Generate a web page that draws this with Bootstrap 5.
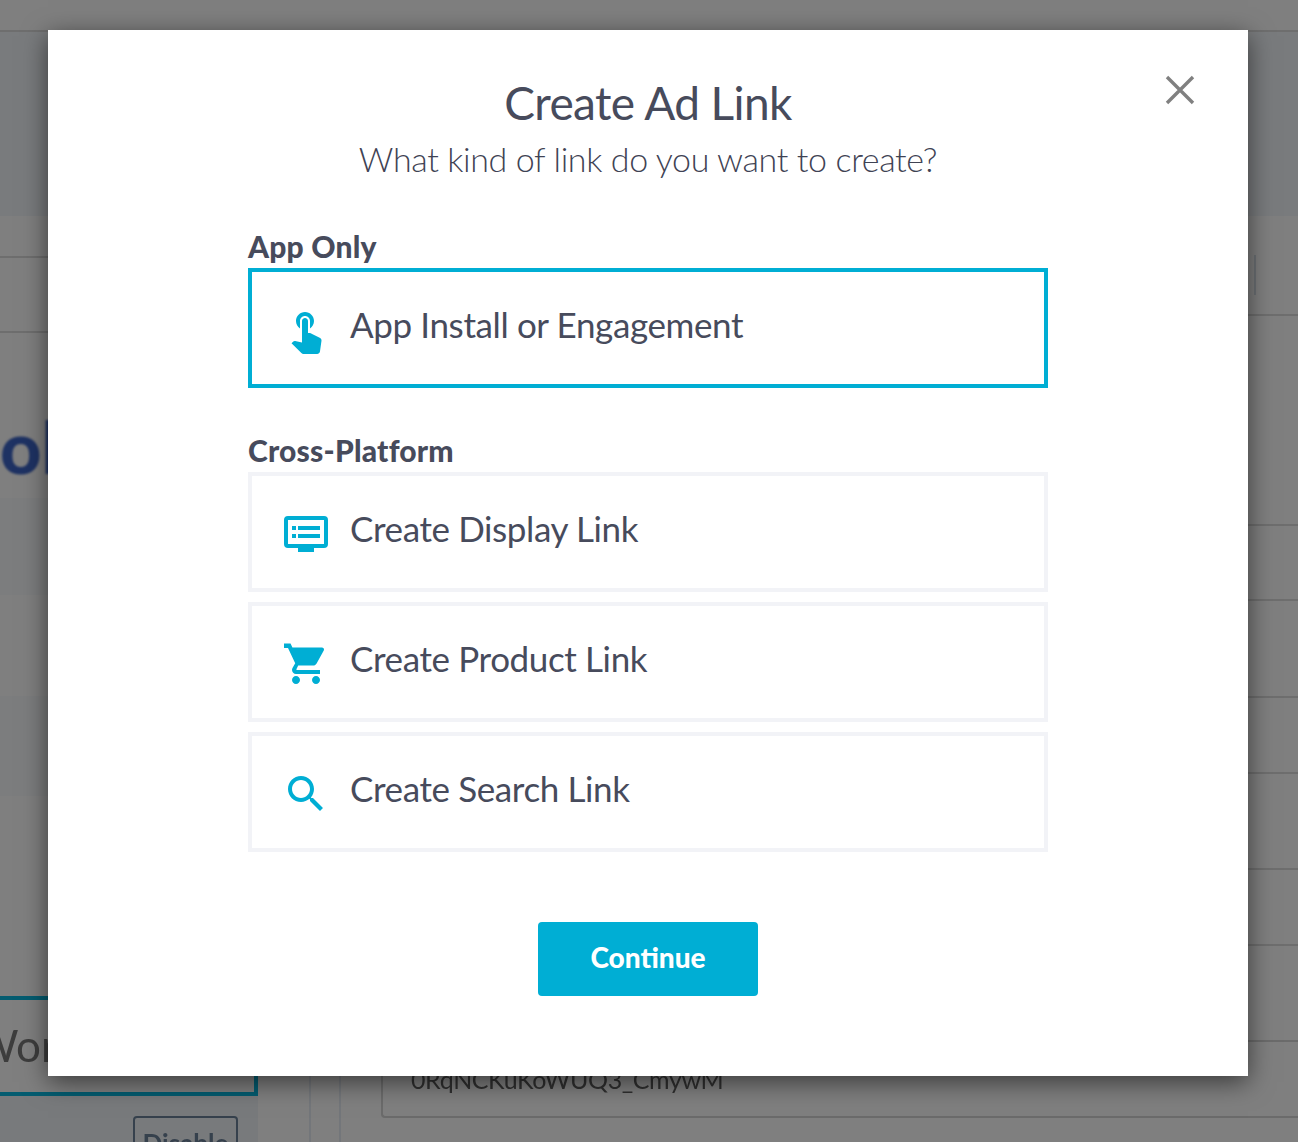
<!DOCTYPE html>
<html lang="en">
<head>
<meta charset="utf-8">
<title>Create Ad Link</title>
<link href="https://cdn.jsdelivr.net/npm/bootstrap@5.3.0/dist/css/bootstrap.min.css" rel="stylesheet">
<style>
html,body{height:1142px;overflow:hidden;background:#7f7f7f;}
body{font-family:"Lato","Liberation Sans",sans-serif;color:#474b5c;}
.stage{position:relative;width:1298px;height:1142px;overflow:hidden;background:#7f7f7f;}
.bg-line{border-bottom:2px solid #6e6e6e;}
.bg-top{height:32px;}
.bg-band{height:84px;background:#797b7d;}
.bg-band-inner{height:100px;background:#797b7d;}
.bg-left{width:258px;flex:none;}
.bg-right{flex:1 1 auto;min-width:0;}
.lb-a{height:42px;}
.lb-b{height:75px;}
.lb-title{height:165px;font:900 72px/1 "Lato",sans-serif;color:#1e3263;padding-top:77px;filter:blur(1px);white-space:nowrap;}
.lb-c{height:97px;background:#7c7d7e;}
.lb-d{height:101px;}
.lb-e{height:100px;background:#7c7d7e;}
.lb-f{height:200px;}
.lb-box{height:100px;border:4px solid #045c70;border-left:0;font-size:44px;line-height:52px;padding-top:19px;color:#3d3d3d;filter:blur(.5px);white-space:nowrap;overflow:hidden;}
.lb-box span{margin-left:-27px;}
.lb-foot{height:60px;padding:20px 0 0 133px;background:#787a7c;}
.lb-btn{width:105px;height:50px;border:2px solid #36414d;border-radius:4px;font:700 26px/1 "Lato",sans-serif;color:#36414d;text-align:center;padding-top:12px;filter:blur(.4px);}
.rr-a{height:100px;display:flex;justify-content:flex-end;padding:39px 42px 0 0;}
.rr-bar{width:2px;height:40px;background:#6c7074;}
.rr-b{height:210px;}
.rr-c{height:75px;}
.rr-d{height:97px;}
.rr-d2{height:96px;}
.rr-e{height:76px;}
.rr-nest{margin-left:51px;border-left:2px solid #73767a;height:100%;padding-left:28px;}
.rr-nest2{border-left:2px solid #73767a;height:100%;padding-left:40px;}
.rr-box{height:78px;border:2px solid #6b6b6b;border-right:0;border-radius:4px 0 0 4px;padding:20px 0 0 28px;font-size:25px;line-height:34px;letter-spacing:-.4px;color:#303030;filter:blur(.3px);white-space:nowrap;}
.rr-slot{height:94px;}
.ad-layer{position:absolute;left:48px;top:30px;width:1200px;}
.ad-dialog{position:relative;height:1046px;background:#fff;border:0;border-radius:0;box-shadow:0 6px 24px rgba(0,0,0,.55);padding-top:43px;}
.ad-title{font:400 46px/60px "Lato",sans-serif;margin:0;color:#474b5c;letter-spacing:-.6px;}
.ad-sub{font:300 34px/50px "Lato",sans-serif;margin:1px 0 0;color:#3f4354;letter-spacing:-.38px;}
.ad-close{position:absolute;left:1117px;top:45px;width:30px;height:30px;padding:0;background:none;border:0;color:#808080;display:block;}
.ad-body{width:800px;margin:0 auto;}
.ad-label{font:900 30px/40px "Lato",sans-serif;letter-spacing:.2px;color:#474b5c;margin:0;padding-bottom:2px;}
.ad-first{margin-top:42px;}
.ad-second{margin-top:42px;}
.ad-opt{height:120px;border:4px solid #f2f3f7;background:#fff;padding:0 0 0 30px;color:#474b5c;font-size:35px;line-height:44px;letter-spacing:-.38px;border-radius:0;}
.ad-opt.is-on{border-color:#00aed4;}
.ad-opt svg{width:48px;height:48px;flex:none;margin:4px 20px 0 0;fill:#00aed4;}
.ad-opt span{display:block;margin-top:-9px;}
.ad-stack{gap:10px;}
.ad-go{width:220px;height:74px;background:#00aed4;border:0;border-radius:4px;color:#fff;font:900 28px/1 "Lato",sans-serif;margin-top:70px;padding:0 0 4px;}
.ad-go:hover{background:#00aed4;color:#fff;}
</style>
</head>
<body>
<div class="stage">
  <div class="bg-top bg-line"></div>
  <div class="bg-band"></div>
  <div class="bg-band-inner"></div>
  <div class="d-flex">
    <div class="bg-left">
      <div class="lb-a bg-line"></div>
      <div class="lb-b bg-line"></div>
      <div class="lb-title">ol</div>
      <div class="lb-c"></div>
      <div class="lb-d"></div>
      <div class="lb-e"></div>
      <div class="lb-f"></div>
      <div class="lb-box"><span>Wor</span></div>
      <div class="lb-foot"><div class="lb-btn">Disable</div></div>
    </div>
    <div class="bg-right">
      <div class="rr-a bg-line"><div class="rr-bar"></div></div>
      <div class="rr-b bg-line"></div>
      <div class="rr-c bg-line"></div>
      <div class="rr-d bg-line"></div>
      <div class="rr-e bg-line"></div>
      <div class="rr-d2 bg-line"></div>
      <div class="rr-e bg-line"></div>
      <div class="rr-nest">
        <div class="rr-nest2">
          <div class="rr-slot"></div>
          <div class="rr-box">0RqNCKuKoWUQ3_CmywM</div>
        </div>
      </div>
    </div>
  </div>

  <div class="ad-layer">
    <div class="ad-dialog modal-content text-center">
      <button type="button" class="ad-close" aria-label="Close">
        <svg viewBox="0 0 30 30" width="30" height="30"><path d="M2 2 L28 28 M28 2 L2 28" stroke="currentColor" stroke-width="3.4" fill="none"/></svg>
      </button>
      <h1 class="ad-title">Create Ad Link</h1>
      <p class="ad-sub">What kind of link do you want to create?</p>
      <div class="ad-body text-start">
        <h2 class="ad-label ad-first">App Only</h2>
        <a href="#" class="ad-opt is-on d-flex align-items-center text-decoration-none">
          <svg viewBox="0 0 24 24"><path d="M9 11.24V7.5C9 6.12 10.12 5 11.5 5S14 6.12 14 7.5v3.74c1.21-.81 2-2.18 2-3.74C16 5.01 13.99 3 11.5 3S7 5.01 7 7.5c0 1.56.79 2.93 2 3.74zm9.84 4.63l-4.54-2.26c-.17-.07-.35-.11-.54-.11H13v-6c0-.83-.67-1.5-1.5-1.5S10 6.67 10 7.5v10.74l-3.43-.72c-.08-.01-.15-.03-.24-.03-.31 0-.59.13-.79.33l-.79.8 4.94 4.94c.27.27.65.44 1.06.44h6.79c.75 0 1.33-.55 1.44-1.28l.75-5.27c.01-.07.02-.14.02-.2 0-.62-.38-1.16-.91-1.38z"/></svg>
          <span>App Install or Engagement</span>
        </a>
        <h2 class="ad-label ad-second">Cross-Platform</h2>
        <div class="d-flex flex-column ad-stack">
          <a href="#" class="ad-opt d-flex align-items-center text-decoration-none">
            <svg viewBox="0 0 48 48"><path fill-rule="evenodd" d="M6 6h36a4 4 0 0 1 4 4v24a4 4 0 0 1-4 4H32v4H16v-4H6a4 4 0 0 1-4-4V10a4 4 0 0 1 4-4zm0 4v24h36V10zm4 6h4v4h-4zm6 0h22v4H16zm-6 8h4v4h-4zm6 0h22v4H16z"/></svg>
            <span>Create Display Link</span>
          </a>
          <a href="#" class="ad-opt d-flex align-items-center text-decoration-none">
            <svg viewBox="0 0 24 24"><path d="M7 18c-1.1 0-1.99.9-1.99 2S5.9 22 7 22s2-.9 2-2-.9-2-2-2zM1 2v2h2l3.6 7.59-1.35 2.45c-.16.28-.25.61-.25.96 0 1.1.9 2 2 2h12v-2H7.42c-.14 0-.25-.11-.25-.25l.03-.12.9-1.83h7.45c.75 0 1.41-.41 1.75-1.03l3.58-6.49c.08-.14.12-.31.12-.48 0-.55-.45-1-1-1H5.21l-.94-2H1zm16 16c-1.1 0-1.99.9-1.99 2s.89 2 1.99 2 2-.9 2-2-.9-2-2-2z"/></svg>
            <span>Create Product Link</span>
          </a>
          <a href="#" class="ad-opt d-flex align-items-center text-decoration-none">
            <svg viewBox="0 0 24 24"><path d="M15.5 14h-.79l-.28-.27C15.41 12.59 16 11.11 16 9.5 16 5.91 13.09 3 9.5 3S3 5.91 3 9.5 5.91 16 9.5 16c1.61 0 3.09-.59 4.23-1.57l.27.28v.79l5 4.99L20.49 19l-4.99-5zm-6 0C7.01 14 5 11.99 5 9.5S7.01 5 9.5 5 14 7.01 14 9.5 11.99 14 9.5 14z"/></svg>
            <span>Create Search Link</span>
          </a>
        </div>
      </div>
      <div><button type="button" class="btn ad-go">Continue</button></div>
    </div>
  </div>
</div>
<script src="https://cdn.jsdelivr.net/npm/bootstrap@5.3.0/dist/js/bootstrap.bundle.min.js"></script>
</body>
</html>
